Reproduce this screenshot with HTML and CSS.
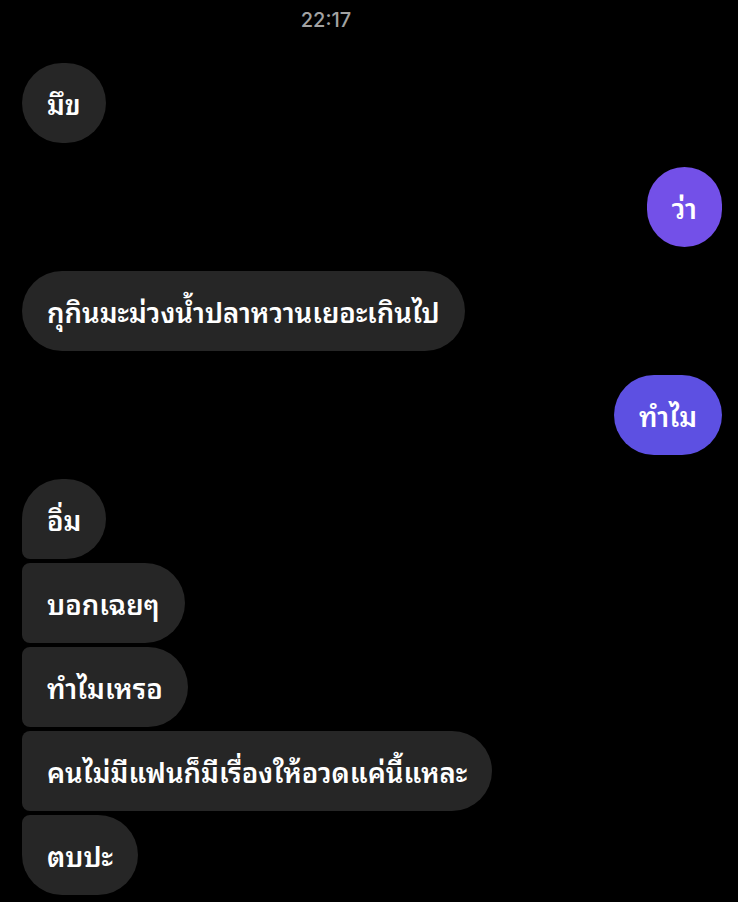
FILE: index.html
```html
<!DOCTYPE html>
<html lang="th">
<head>
  <meta charset="UTF-8">
  <title>Chat</title>
  <link rel="stylesheet" href="styles.css">
</head>
<body>
  <div id="thread">
    <div class="timestamp">22:17</div>

    <div class="group in">
      <div class="bubble">มึข</div>
    </div>

    <div class="group out">
      <div class="bubble violet">ว่า</div>
    </div>

    <div class="group in">
      <div class="bubble">กุกินมะม่วงน้ำปลาหวานเยอะเกินไป</div>
    </div>

    <div class="group out">
      <div class="bubble indigo">ทำไม</div>
    </div>

    <div class="group in stack">
      <div class="bubble">อิ่ม</div>
      <div class="bubble">บอกเฉยๆ</div>
      <div class="bubble">ทำไมเหรอ</div>
      <div class="bubble">คนไม่มีแฟนก็มีเรื่องให้อวดแค่นี้แหละ</div>
      <div class="bubble">ตบปะ</div>
    </div>
  </div>
</body>
</html>
```

FILE: styles.css
```css
html, body {
  margin: 0;
  padding: 0;
  background: #000;
  font-family: "Noto Sans", "Noto Sans Thai Looped", "Noto Sans Thai", sans-serif;
}
#thread {
  display: flex;
  flex-direction: column;
  gap: 24px;
  padding: 0 16px 0 22px;
}
.timestamp {
  text-align: center;
  color: #a3a3a3;
  font-family: Inter, sans-serif;
  font-size: 20px;
  font-weight: 500;
  line-height: 22px;
  padding: 9px 92px 8px 0;
  margin-bottom: -24px;
}
.timestamp + .group {
  margin-top: 24px;
}
.group {
  display: flex;
  flex-direction: column;
  gap: 4px;
}
.group.in {
  align-items: flex-start;
}
.group.out {
  align-items: flex-end;
}
.bubble {
  box-sizing: border-box;
  min-height: 80px;
  display: flex;
  align-items: center;
  padding: 0 25px;
  border-radius: 40px;
  background: #262626;
  color: #fff;
  font-size: 27.5px;
  font-weight: 600;
}
.bubble.violet {
  background: #7350e8;
}
.bubble.indigo {
  background: #5d50e2;
}
/* Consecutive messages from the same sender */
.stack .bubble {
  border-radius: 8px 40px 40px 8px;
}
.stack .bubble:first-child {
  border-top-left-radius: 40px;
}
.stack .bubble:last-child {
  border-bottom-left-radius: 40px;
}
```
